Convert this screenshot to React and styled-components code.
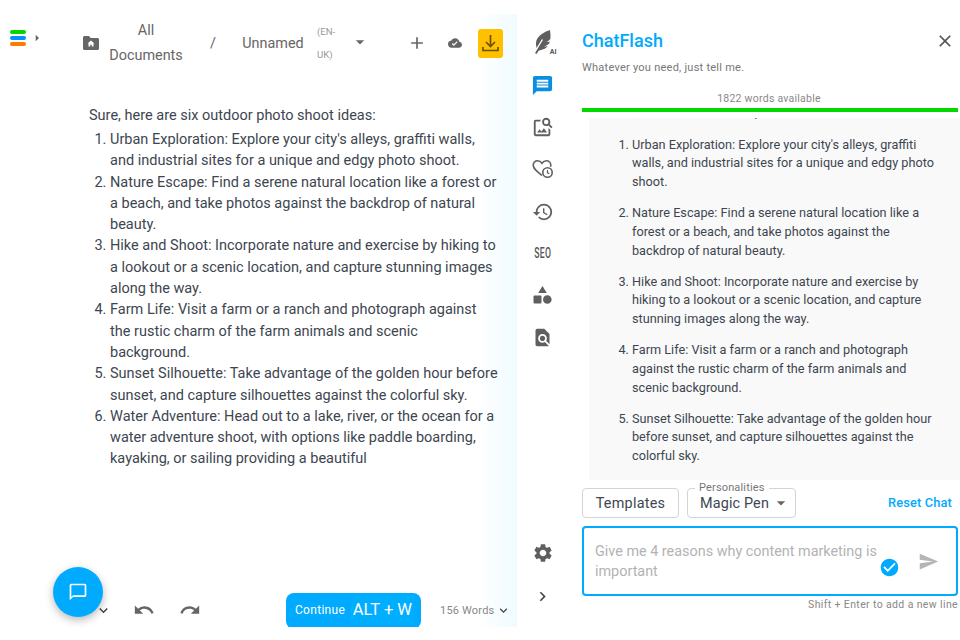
import React from "react";
import styled, { createGlobalStyle } from "styled-components";
import { FaFeatherAlt } from "react-icons/fa";
import {
  MdAdd, MdArrowDropDown, MdArrowRight, MdCheckCircle, MdChatBubbleOutline, MdClose,
  MdCloudDone, MdFindInPage, MdHistory, MdMessage, MdOutlineImageSearch, MdRedo, MdSend,
  MdSettings, MdUndo, MdKeyboardArrowDown, MdKeyboardArrowRight,
} from "react-icons/md";

const Global = createGlobalStyle`
  html, body { margin: 0; padding: 0; background: #fff; }
  body { font-family: Roboto, "Liberation Sans", sans-serif; color: #3d4650; }
  * { box-sizing: border-box; }
`;

const Page = styled.div`
  position: relative; width: 960px; height: 627px; display: flex; overflow: hidden; background: #fff;
`;
const Editor = styled.section`
  position: relative; width: 517px; height: 627px; display: flex; flex-direction: column;
  &::after {
    content: ""; position: absolute; right: 0; top: 14px; bottom: 0; width: 40px; z-index: 0;
    background: linear-gradient(to right, #ffffff, #f0fbff); pointer-events: none;
  }
`;
const Toolbar = styled.header`
  position: relative; z-index: 1; height: 58px; margin-top: 14px; display: flex; align-items: center; padding-left: 10px; color: #5f6368;
`;
const Logo = styled.div`
  width: 16px; display: flex; flex-direction: column; gap: 2px; margin-top: -10px;
`;
const LogoBar = styled.span`
  height: 4px; border-radius: 2px; background: ${(p) => p.$c};
`;
const Crumb = styled.span`
  font-size: 14.4px; font-weight: 400; line-height: 25px; text-align: center; color: #666; width: ${(p) => p.$w}; margin-left: ${(p) => p.$ml || 0};
`;
const Lang = styled.span`
  width: 24px; margin-left: 13px; font-size: 9.6px; line-height: 23px; color: #999; margin-top: -1px;
`;
const IconSlot = styled.span`
  display: inline-flex; margin-left: ${(p) => p.$ml}; margin-top: ${(p) => p.$mt || 0}; color: #666;
`;
const SaveButton = styled.button`
  width: 25px; height: 29px; margin-left: 16px; border: 0; padding: 0; border-radius: 3px; background: #ffc000;
  display: flex; align-items: center; justify-content: center; color: #6b5200;
`;
const Document = styled.article`
  position: relative; z-index: 1; padding: 33px 18px 0 89px; font-size: 14.5px; line-height: 21.3px; color: #3d4650;
  p { margin: 0 0 2.7px; }
  ol { margin: 0; padding: 0 0 0 21px; }
`;
const BottomBar = styled.footer`
  position: relative; z-index: 1; margin-top: auto; height: 34px; display: flex; align-items: center; padding-left: 95px; color: #666;
`;
const Continue = styled.button`
  width: 135px; height: 36px; margin-left: 85px; margin-bottom: -2px; border: 0; border-radius: 8px; background: #00aaff; color: #fff;
  display: flex; align-items: center; padding: 0 7px 2px 9px; font-family: inherit;
`;
const ContinueLabel = styled.span`
  font-size: 12px; letter-spacing: 0.3px;
`;
const Shortcut = styled.span`
  margin-left: auto; font-size: 16.5px; height: 30px; line-height: 30px; padding: 0 2px; background: #00aeff;
`;
const WordCount = styled.span`
  margin-left: 19px; font-size: 11px; color: #888; display: flex; align-items: center; gap: 2px; letter-spacing: 0.2px;
`;
const Fab = styled.button`
  position: absolute; left: 53px; top: 567px; z-index: 2; width: 50px; height: 50px; border-radius: 50%; border: 0; background: #00aaff; color: #fff;
  display: flex; align-items: center; justify-content: center; box-shadow: 0 3px 8px rgba(0,0,0,.28);
`;
const Rail = styled.nav`
  width: 48px; padding: 33px 0 0 3px; display: flex; flex-direction: column; align-items: center; color: #5f5f5f;
`;
const RailItem = styled.span`
  position: relative; height: ${(p) => p.$h || "42px"}; display: flex; align-items: flex-start; justify-content: center; color: ${(p) => p.$c || "#5f5f5f"};
`;
const Quill = styled.span`
  display: flex; transform: rotate(-14deg) translate(0, -1px);
`;
const AiTag = styled.small`
  position: absolute; right: -4px; top: 15px; font-size: 7px; font-weight: 700; color: #555;
`;
const SeoText = styled.span`
  font-size: 14px; font-weight: 500; color: #555; transform: scaleX(.62); letter-spacing: 0.5px; margin-top: 2px;
`;
const RailBottom = styled.div`
  margin-top: auto; padding-bottom: 21px; display: flex; flex-direction: column; align-items: center; gap: 23px; color: #5f5f5f;
`;
const Chat = styled.main`
  flex: 1; display: flex; flex-direction: column; padding: 0 0 0 17px; min-width: 0;
`;
const Head = styled.div`
  position: relative; padding: 30px 2px 0 0;
`;
const Title = styled.h1`
  margin: 0; font-size: 18px; line-height: 22px; font-weight: 500; color: #00aaff;
`;
const Subtitle = styled.p`
  margin: 9px 0 0; font-size: 11px; line-height: 14px; color: #777; letter-spacing: 0.25px;
`;
const CloseButton = styled.span`
  position: absolute; right: 5px; top: 31px; color: #555; display: flex;
`;
const Quota = styled.div`
  margin-top: 18px; text-align: center; font-size: 10.5px; line-height: 12px; color: #888; letter-spacing: 0.25px; padding-right: 2px;
`;
const QuotaBar = styled.div`
  height: 4px; margin-top: 3px; background: #00d800;
`;
const Transcript = styled.div`
  height: 362px; margin: 6px 0 8px 7px; background: #f9f9f9; overflow: hidden; padding: 0 22px 0 19px;
  font-size: 12.7px; line-height: 18.7px; color: #3d4650;
  p { margin: -15px 0 0; }
  ol { margin: 14px 0 0; padding: 0 0 0 24px; }
  li { margin-bottom: 12.4px; }
`;
const Controls = styled.div`
  height: 30px; display: flex; align-items: stretch; padding-right: 8px;
`;
const Templates = styled.button`
  width: 97px; border: 1px solid #d4d4d4; border-radius: 4px; background: #fff; font: 400 14.4px Roboto, sans-serif; color: #3d4650; letter-spacing: 0.25px; padding: 0;
`;
const Select = styled.div`
  position: relative; width: 109px; margin-left: 8px; border: 1px solid #d4d4d4; border-radius: 4px; display: flex; align-items: center; padding: 0 0 0 12px;
  font-size: 14.4px; color: #3d4650; letter-spacing: 0.15px; gap: 2px;
`;
const Legend = styled.span`
  position: absolute; left: 7px; top: -7px; padding: 0 4px; background: #fff; font-size: 11px; line-height: 12px; color: #777; letter-spacing: 0.15px;
`;
const Reset = styled.a`
  margin-left: auto; align-self: center; font-size: 12.8px; font-weight: 500; color: #00aaff; letter-spacing: 0.15px; margin-top: -1px;
`;
const Composer = styled.div`
  position: relative; height: 70px; margin: 8px 2px 0 0; border: 2px solid #00aaff; border-radius: 4px; padding: 14px 70px 0 11px;
  font-size: 14.4px; line-height: 20px; color: #b3b3b3;
`;
const CheckBadge = styled.span`
  position: absolute; right: 56px; top: 29px; color: #00aaff; display: flex; background: radial-gradient(circle, #fff 45%, transparent 46%);
`;
const SendBadge = styled.span`
  position: absolute; right: 17px; top: 23px; color: #b5b5b5; display: flex;
`;
const Hint = styled.div`
  margin: 2px 2px 0 0; text-align: right; font-size: 10.5px; line-height: 13px; color: #888; letter-spacing: 0.37px;
`;

const FolderHome = () => (
  <svg width="16" height="14" viewBox="0 0 16 14">
    <path fill="#666" d="M1.5 0h4.5l1.6 2h6.9c.8 0 1.5.7 1.5 1.5v9c0 .8-.7 1.5-1.5 1.5h-13C.7 14 0 13.300 0 12.500v-11C0 .7.7 0 1.500 0z" />
    <path fill="#fff" d="M8 4.500l3.500 3h-1v3H8.800V8.700H7.200v1.800H5.500v-3h-1z" />
  </svg>
);
const Download = () => (
  <svg width="19" height="19" viewBox="0 0 19 19" fill="none" stroke="currentColor" strokeWidth="1.700">
    <path d="M9.500 1v11M5 8l4.500 4.500L14 8M2 13v3.500h15V13" />
  </svg>
);
const HeartClock = () => (
  <svg width="22" height="20" viewBox="0 0 22 20" fill="none" stroke="currentColor" strokeWidth="1.600">
    <path d="M10 16.500C5 12.500 1.200 9.800 1.200 6A4.300 4.300 0 0 1 5.500 1.700c1.800 0 3.400 1 4.500 2.600 1.100-1.600 2.700-2.600 4.500-2.600 2.400 0 4.300 1.900 4.300 4.300 0 .6-.1 1.200-.3 1.700" />
    <circle cx="15.500" cy="13.500" r="4.700" />
    <path d="M15.500 11v2.800l1.800 1" strokeWidth="1.200" />
  </svg>
);
const Shapes = () => (
  <svg width="19" height="19" viewBox="0 0 19 19" fill="currentColor">
    <path d="M9.500 0l4.300 7H5.200z" />
    <rect x="0.500" y="9.500" width="8" height="8" rx="1" />
    <circle cx="14.300" cy="13.500" r="4.300" />
  </svg>
);

const editorItems = [
  "Urban Exploration: Explore your city's alleys, graffiti walls, and industrial sites for a unique and edgy photo shoot.",
  "Nature Escape: Find a serene natural location like a forest or a beach, and take photos against the backdrop of natural beauty.",
  "Hike and Shoot: Incorporate nature and exercise by hiking to a lookout or a scenic location, and capture stunning images along the way.",
  "Farm Life: Visit a farm or a ranch and photograph against the rustic charm of the farm animals and scenic background.",
  "Sunset Silhouette: Take advantage of the golden hour before sunset, and capture silhouettes against the colorful sky.",
];

export default function App() {
  return (
    <Page>
      <Global />
      <Editor>
        <Toolbar>
          <Logo>
            <LogoBar $c="#00d800" />
            <LogoBar $c="#0090ff" />
            <LogoBar $c="#ff7a00" />
          </Logo>
          <IconSlot $ml="3px" $mt="-10px"><MdArrowRight size={16} /></IconSlot>
          <IconSlot $ml="38px"><FolderHome /></IconSlot>
          <Crumb $w="74px" $ml="10px">All Documents</Crumb>
          <Crumb $w="10px" $ml="25px">/</Crumb>
          <Crumb $w="62px" $ml="24px">Unnamed</Crumb>
          <Lang>(EN-UK)</Lang>
          <IconSlot $ml="9px" $mt="-3px"><MdArrowDropDown size={20} /></IconSlot>
          <IconSlot $ml="37px"><MdAdd size={20} /></IconSlot>
          <IconSlot $ml="21px"><MdCloudDone size={14} /></IconSlot>
          <SaveButton aria-label="Download"><Download /></SaveButton>
        </Toolbar>
        <Document>
          <p>Sure, here are six outdoor photo shoot ideas:</p>
          <ol>
            {editorItems.map((t) => <li key={t}>{t}</li>)}
            <li>Water Adventure: Head out to a lake, river, or the ocean for a water adventure shoot, with options like paddle boarding, kayaking, or sailing providing a beautiful</li>
          </ol>
        </Document>
        <BottomBar>
          <MdKeyboardArrowDown size={17} color="#444" />
          <IconSlot $ml="21px"><MdUndo size={22} /></IconSlot>
          <IconSlot $ml="24px"><MdRedo size={22} /></IconSlot>
          <Continue>
            <ContinueLabel>Continue</ContinueLabel>
            <Shortcut>ALT + W</Shortcut>
          </Continue>
          <WordCount>156 Words <MdKeyboardArrowDown size={15} color="#444" /></WordCount>
        </BottomBar>
      </Editor>
      <Fab aria-label="Open chat"><MdChatBubbleOutline size={20} /></Fab>
      <Rail>
        <RailItem $h="41px"><Quill><FaFeatherAlt size={20} /></Quill><AiTag>AI</AiTag></RailItem>
        <RailItem $c="#0a8fe0"><MdMessage size={23} /></RailItem>
        <RailItem $h="43px"><MdOutlineImageSearch size={22} /></RailItem>
        <RailItem><HeartClock /></RailItem>
        <RailItem><MdHistory size={22} /></RailItem>
        <RailItem $h="43px"><SeoText>SEO</SeoText></RailItem>
        <RailItem $h="41px"><Shapes /></RailItem>
        <RailItem><MdFindInPage size={21} /></RailItem>
        <RailBottom>
          <MdSettings size={22} />
          <MdKeyboardArrowRight size={19} color="#444" />
        </RailBottom>
      </Rail>
      <Chat>
        <Head>
          <Title>ChatFlash</Title>
          <Subtitle>Whatever you need, just tell me.</Subtitle>
          <CloseButton><MdClose size={20} /></CloseButton>
          <Quota>1822 words available</Quota>
          <QuotaBar />
        </Head>
        <Transcript>
          <p>Sure, here are six outdoor photo shoot ideas:</p>
          <ol>
            {editorItems.map((t) => <li key={t}>{t}</li>)}
          </ol>
        </Transcript>
        <Controls>
          <Templates>Templates</Templates>
          <Select>
            <Legend>Personalities</Legend>
            Magic Pen <MdArrowDropDown size={20} color="#666" />
          </Select>
          <Reset>Reset Chat</Reset>
        </Controls>
        <Composer>
          Give me 4 reasons why content marketing is important
          <CheckBadge><MdCheckCircle size={21} /></CheckBadge>
          <SendBadge><MdSend size={21} /></SendBadge>
        </Composer>
        <Hint>Shift + Enter to add a new line</Hint>
      </Chat>
    </Page>
  );
}
